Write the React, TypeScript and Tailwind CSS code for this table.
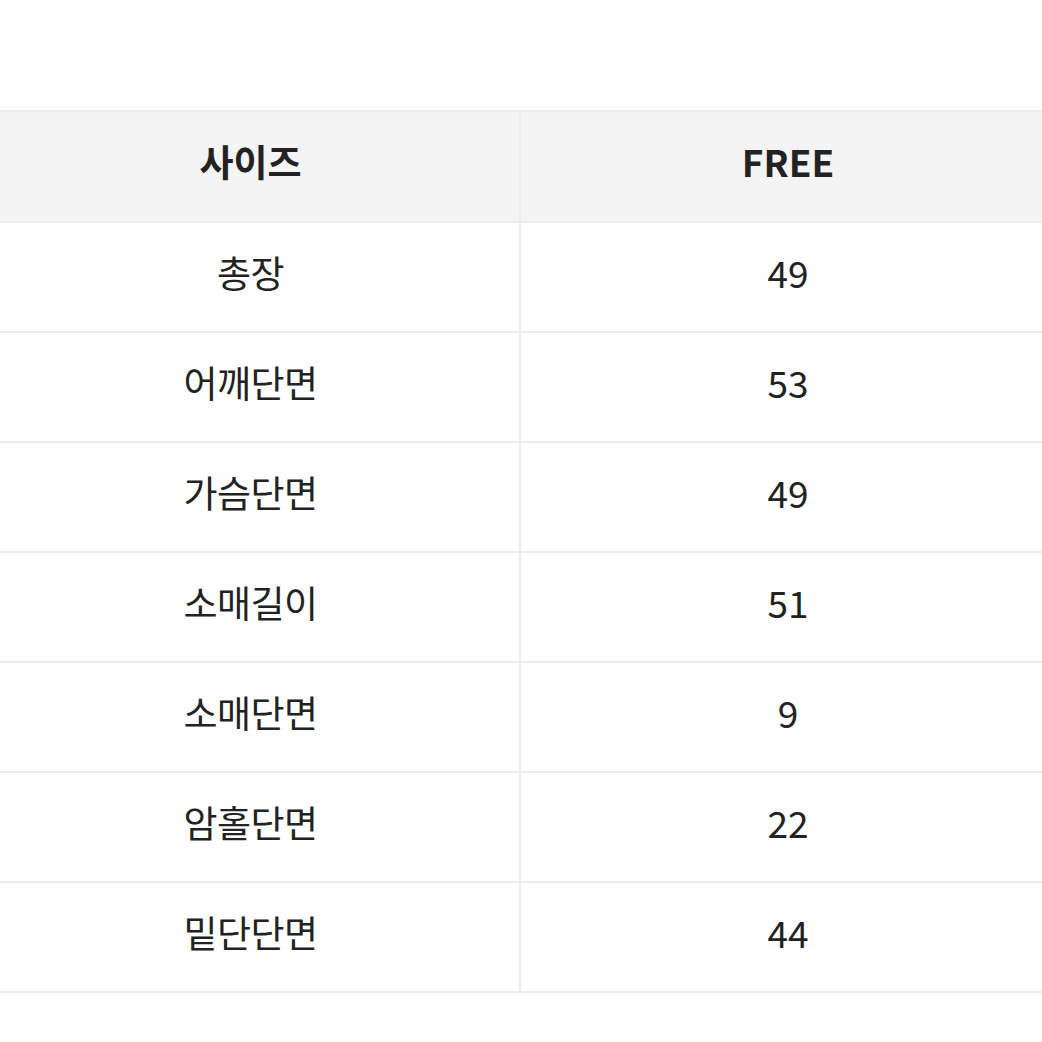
import React from "react";

const rows: [string, string][] = [
  ["총장", "49"],
  ["어깨단면", "53"],
  ["가슴단면", "49"],
  ["소매길이", "51"],
  ["소매단면", "9"],
  ["암홀단면", "22"],
  ["밑단단면", "44"],
];

export default function App() {
  return (
    <div
      className="w-[1042px] h-[1042px] bg-white overflow-hidden text-[#222]"
      style={{ fontFamily: '"Noto Sans CJK KR", "Noto Sans", sans-serif' }}
    >
      <div className="pt-[110px] ml-[-18px] w-[1073px]">
        <div className="border-t-2 border-[#ececec]">
          <div className="grid grid-cols-[539px_534px] h-[111px] bg-[#f4f4f4] border-b-2 border-[#ececec]">
            <div className="flex items-center justify-center pb-[10px] border-r-2 border-[#ececec] text-[37px] font-bold">
              사이즈
            </div>
            <div className="flex items-center justify-center pb-[10px] text-[37px] font-bold">
              FREE
            </div>
          </div>
          {rows.map(([k, v]) => (
            <div
              key={k}
              className="grid grid-cols-[539px_534px] h-[110px] border-b-2 border-[#ececec]"
            >
              <div className="flex items-center justify-center pb-[8px] border-r-2 border-[#ececec] text-[37px] tracking-[-0.5px]">
                {k}
              </div>
              <div className="flex items-center justify-center pb-[8px] text-[37px]">
                {v}
              </div>
            </div>
          ))}
        </div>
      </div>
    </div>
  );
}
